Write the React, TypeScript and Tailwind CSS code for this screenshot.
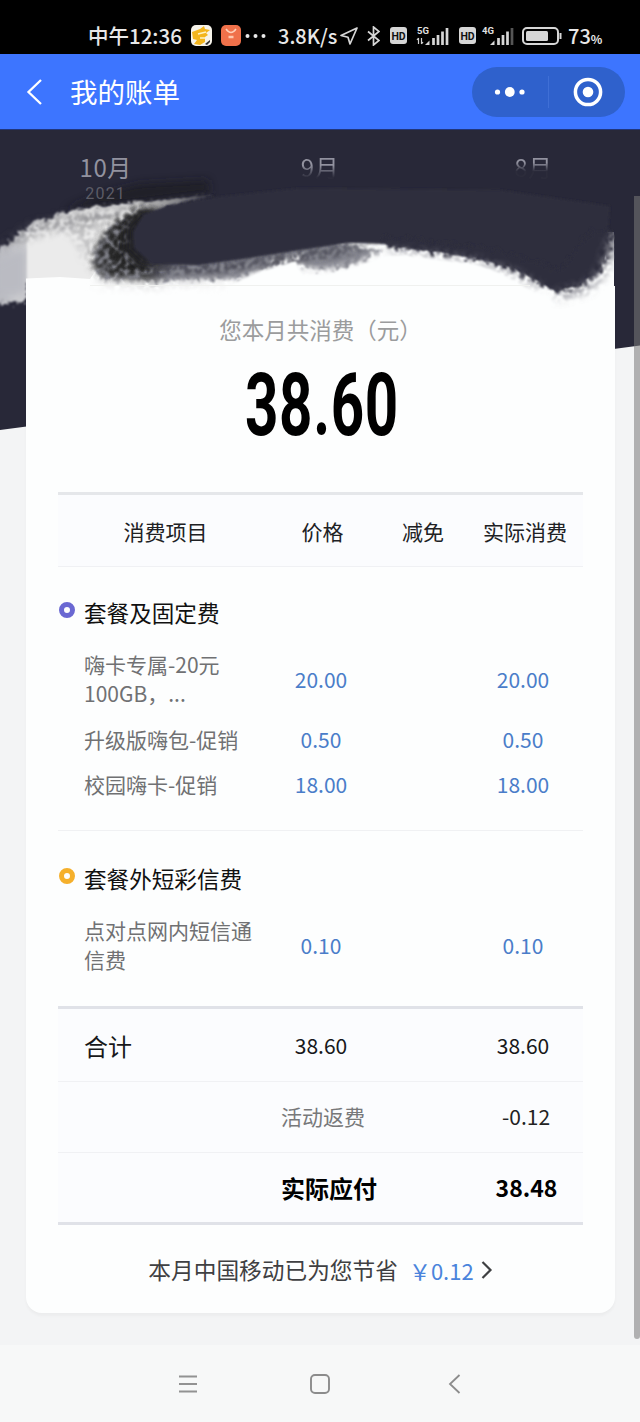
import type { ReactNode } from 'react';

interface BillItem {
  name: string;
  price: string;
  actual: string;
}

interface BillGroup {
  title: string;
  ring: string;
  items: BillItem[];
}

const groups: BillGroup[] = [
  {
    title: '套餐及固定费',
    ring: 'border-[#6a68d2]',
    items: [
      { name: '嗨卡专属-20元 100GB，...', price: '20.00', actual: '20.00' },
      { name: '升级版嗨包-促销', price: '0.50', actual: '0.50' },
      { name: '校园嗨卡-促销', price: '18.00', actual: '18.00' },
    ],
  },
  {
    title: '套餐外短彩信费',
    ring: 'border-[#f5b02c]',
    items: [{ name: '点对点网内短信通信费', price: '0.10', actual: '0.10' }],
  },
];

function Row({ className = '', children }: { className?: string; children: ReactNode }) {
  return (
    <div className={`grid grid-cols-[212px_102px_102px_98px] items-center ${className}`}>
      {children}
    </div>
  );
}

function HdBadge() {
  return (
    <svg width="17" height="17" viewBox="0 0 17 17">
      <rect width="17" height="17" rx="3" fill="#d6d6d6" />
      <text x="8.5" y="12.5" textAnchor="middle" fontSize="10.5" fontWeight="700" fontFamily="Roboto, sans-serif" fill="#111">HD</text>
    </svg>
  );
}

function Signal({ label, weak = false }: { label: string; weak?: boolean }) {
  return (
    <svg width="34" height="20" viewBox="0 0 34 20">
      <text x="1" y="8" fontSize="9.5" fontWeight="700" fontFamily="Roboto, sans-serif" fill="#e0e0e0">{label}</text>
      {!weak && (
        <path d="M2.500 18v-6M1 14l1.500-2M5.500 12v6M7 16l-1.500 2" stroke="#d0d0d0" strokeWidth="1.200" fill="none" />
      )}
      <path d="M9 19l4.500-4.500v4.500z" fill="#d6d6d6" />
      <path d="M17.500 19v-7M22 19v-10M26.500 19v-13.500" stroke="#d6d6d6" strokeWidth="2.700" />
      <path d="M31 19V2" stroke={weak ? '#555' : '#d6d6d6'} strokeWidth="2.700" />
    </svg>
  );
}

function StatusBar() {
  return (
    <div className="flex h-[54px] items-center bg-black pt-[17px] pl-[88px] text-[20.5px] font-medium leading-none whitespace-nowrap text-[#e8e8e8]">
      <span className="w-[103px]">中午12:36</span>
      <svg className="mr-[9px]" width="21" height="21" viewBox="0 0 21 21">
        <rect width="21" height="21" rx="5" fill="#f6f3ea" />
        <path d="M1 7l8-3 4-3 1 3 5 1-4 3 2 2-3 2v5l-5 3-6-1 3-4-4-1z" fill="#f3b51d" />
        <path d="M7 9l8-2M9 13h5" stroke="#fff3c4" strokeWidth="1.500" />
        <path d="M14 19l5-4v2l-3 3z" fill="#333" />
      </svg>
      <svg className="mr-[4px]" width="20" height="21" viewBox="0 0 20 21">
        <rect width="20" height="21" rx="5" fill="#f0714a" />
        <path d="M5 4q5 7 10 0" stroke="#ffd0b8" strokeWidth="1.500" fill="none" />
        <path d="M7.500 12h5" stroke="#ffc9ae" strokeWidth="2.500" />
      </svg>
      <svg className="mr-[12px]" width="21" height="6" viewBox="0 0 21 6" fill="#e8e8e8">
        <circle cx="2.500" cy="3" r="2" />
        <circle cx="10.500" cy="3" r="2" />
        <circle cx="18.500" cy="3" r="2" />
      </svg>
      <span className="w-[62px] text-[20px]">3.8K/s</span>
      <svg className="mr-[9px]" width="18" height="18" viewBox="0 0 18 18" fill="none" stroke="#d6d6d6" strokeWidth="1.700" strokeLinejoin="round">
        <path d="M17 1L1 8.500l7 1.800L10 17z" />
      </svg>
      <svg className="mr-[10px]" width="13" height="20" viewBox="0 0 13 20" fill="none" stroke="#d6d6d6" strokeWidth="1.700">
        <path d="M1 5.500l11 9L6.500 19V1L12 5.500l-11 9" />
      </svg>
      <HdBadge />
      <span className="ml-[9px]"><Signal label="5G" /></span>
      <span className="ml-[9px]"><HdBadge /></span>
      <span className="ml-[5px]"><Signal label="4G" weak /></span>
      <svg className="ml-[7px]" width="40" height="18" viewBox="0 0 40 18">
        <rect x="1" y="1" width="35" height="16" rx="4" fill="none" stroke="#d6d6d6" strokeWidth="2" />
        <rect x="4" y="4" width="22" height="10" rx="1.500" fill="#d6d6d6" />
        <path d="M38.500 6v6" stroke="#d6d6d6" strokeWidth="2" />
      </svg>
      <span className="ml-[6px] text-[20px]">73<span className="text-[12px] font-bold">%</span></span>
    </div>
  );
}

function NavBar() {
  return (
    <div className="flex h-[76px] items-center border-b border-[#20367c] bg-[#3d75ff] pr-[15px] pl-[26px]">
      <svg width="17" height="28" viewBox="0 0 17 28" fill="none" stroke="#fff" strokeWidth="2.300">
        <path d="M15 2L2.500 14 15 26" />
      </svg>
      <h1 className="ml-[27px] text-[27.5px] leading-none text-white">我的账单</h1>
      <div className="ml-auto flex h-[50px] w-[153px] items-center rounded-full bg-[#2f61cc]">
        <svg className="ml-[21px]" width="34" height="12" viewBox="0 0 34 12" fill="#fff">
          <circle cx="4.500" cy="6" r="2.600" />
          <circle cx="16.800" cy="6" r="4.900" />
          <circle cx="29" cy="6" r="2.600" />
        </svg>
        <span className="ml-[21px] h-8 w-px bg-[#3f6fd6]" />
        <svg className="ml-[24px]" width="30" height="30" viewBox="0 0 30 30">
          <circle cx="15" cy="15" r="12.600" fill="none" stroke="#fff" strokeWidth="3.500" />
          <circle cx="15" cy="15" r="5.300" fill="#fff" />
        </svg>
      </div>
    </div>
  );
}

// 卡片顶部的涂抹笔触
function BrushStroke() {
  return (
    <svg className="absolute top-0 left-0" width="640" height="184" viewBox="0 130 640 184">
      <defs>
        <filter id="rough" x="-10%" y="-20%" width="120%" height="140%">
          <feTurbulence type="fractalNoise" baseFrequency="0.2" numOctaves="3" seed="4" result="n" />
          <feDisplacementMap in="SourceGraphic" in2="n" scale="16" xChannelSelector="R" yChannelSelector="G" />
          <feGaussianBlur stdDeviation="1" />
        </filter>
        <filter id="grain" x="-20%" y="-30%" width="140%" height="160%">
          <feGaussianBlur in="SourceGraphic" stdDeviation="4" result="b" />
          <feTurbulence type="fractalNoise" baseFrequency="0.2" numOctaves="3" seed="9" />
          <feColorMatrix values="0 0 0 0 0  0 0 0 0 0  0 0 0 0 0  5 0 0 0 -1.900" result="m" />
          <feComposite in="b" in2="m" operator="in" />
          <feGaussianBlur stdDeviation="0.9" />
        </filter>
        <filter id="soft" x="-20%" y="-40%" width="140%" height="180%">
          <feGaussianBlur stdDeviation="4" />
        </filter>
        <filter id="edge" x="-5%" y="-10%" width="110%" height="120%">
          <feGaussianBlur stdDeviation="1.200" />
        </filter>
        <linearGradient id="pale" gradientUnits="userSpaceOnUse" x1="0" x2="215" y1="0" y2="0">
          <stop offset="0" stopColor="#b9bac0" />
          <stop offset="0.2" stopColor="#dededf" />
          <stop offset="0.6" stopColor="#dcdcdc" />
          <stop offset="0.8" stopColor="#8f8f92" />
          <stop offset="1" stopColor="#3a3a46" />
        </linearGradient>
        <linearGradient id="strip" x1="0" x2="0" y1="0" y2="1">
          <stop offset="0" stopColor="#63636e" />
          <stop offset="1" stopColor="#fdfefe" />
        </linearGradient>
      </defs>
      {/* 笔触上方的阴影 */}
      <path d="M64 210L100 194 140 184 208 180 210 193 130 203z" fill="#1c1c20" opacity="0.75" filter="url(#soft)" />
      {/* 浅色部分 */}
      <path d="M-12 256L12 240 36 222 60 214 84 209 130 205 216 195 170 206 140 222 130 284 26 284 26 303 -12 304z" fill="url(#pale)" filter="url(#rough)" />
      <path d="M60 216L84 210 130 204 216 195 160 206 120 222 90 226z" fill="url(#pale)" filter="url(#edge)" />
      <path d="M-6 262L26 246V294H-6z" fill="#babbc2" filter="url(#soft)" />
      <path d="M27 233H60L92 220 112 216 112 282H27z" fill="#ebebeb" filter="url(#edge)" />
      <path d="M26 278.500L60 277 90 279 96 270 614 270V320H26z" fill="#fdfefe" />
      <path d="M-6 250L26 226 60 216 104 210 146 206 128 218 70 226 24 240z" fill="#606066" opacity="0.55" filter="url(#grain)" />
      <path d="M60 226L100 212 92 250 86 262 76 240z" fill="#77777a" opacity="0.35" filter="url(#grain)" />
      {/* 深色部分 */}
      <path d="M130 262L240 244 400 236 560 250 604 262 608 232H614V300H130z" fill="#fdfefe" />
      <path d="M606 232H614V264H606z" fill="url(#strip)" />
      <path d="M134 214L108 228 97 246 94 262 100 279 150 283 190 280 236 280 262 270 298 254 304 266 320 272 354 265 384 251 300 238 160 240z" fill="#85868f" filter="url(#rough)" />
      <path d="M140 208L112 222 96 244 92 266 104 279 160 284 160 214z" fill="#2a2a2a" filter="url(#grain)" />
      <path d="M140 208L120 222 108 244 112 268 160 276 160 214z" fill="#202020" filter="url(#grain)" />
      <path d="M144 208L126 226 124 250 140 266 170 268 180 220z" fill="#232325" filter="url(#soft)" />
      <path d="M150 258L200 262 250 258 300 250 350 244 380 246 300 266 250 272 190 280 150 278z" fill="#4b4c57" filter="url(#grain)" />
      <path d="M216 197L170 205 144 214 133 232 134 248 152 264 200 265 250 258 300 250 350 243 384 244 440 252 480 259 512 268 540 282 556 291 580 284 596 272 605 254 608 232 610 206 500 190 300 188z" fill="#2d2d3c" filter="url(#edge)" />
      <path d="M384 236L386 247 440 254 480 261 512 270 540 284 558 292 582 286 600 272 609 252 612 232 590 232 560 270 500 250z" fill="#2d2d3c" filter="url(#rough)" />
      <path d="M556 296L586 288 604 270 612 238" stroke="#82828b" strokeWidth="8" fill="none" filter="url(#grain)" />
      <path d="M388 251L440 257 480 263 512 273 540 288" stroke="#9a9aa2" strokeWidth="5" fill="none" filter="url(#grain)" />
      <path d="M94 284L150 286 190 283 236 283 262 273M300 268L322 274 354 268 384 254" stroke="#f4f4f5" strokeWidth="9" fill="none" filter="url(#grain)" />
      <path d="M228 286L262 271 296 261 299 269 304 276 330 274 360 266 386 256 402 255 440 260 474 264 500 273 530 291 546 296 556 306H228z" fill="#fdfefe" filter="url(#edge)" />
      <path d="M615 228H626V306H615z" fill="#282838" />
      <path d="M90 285.500H530" stroke="#f0f1ef" />
    </svg>
  );
}

function Months() {
  return (
    <div className="relative z-10 grid h-[102px] grid-cols-3 pt-[22px] text-center text-[24px] leading-[30px] tracking-[0.5px]">
      <div className="pr-[2px] text-[#92929f]">
        10月
        <div className="font-[Roboto,sans-serif] text-[16px] leading-[23px] tracking-[1.2px] text-[#5c5c66]">2021</div>
      </div>
      <div className="h-[30px] bg-gradient-to-b from-[#92929f] from-45% to-[#2c2c3b] to-85% bg-clip-text text-transparent">9月</div>
      <div className="h-[30px] bg-gradient-to-b from-[#92929f] from-35% to-[#2c2c3b] to-65% bg-clip-text text-transparent">8月</div>
    </div>
  );
}

function BillTable() {
  return (
    <div className="mx-8 text-[21px] leading-[29px]">
      <Row className="h-[75px] border-t-[3px] border-b border-t-[#e5e7ea] border-b-[#f0f1f4] bg-[#fbfcfe] pt-0.5 text-center text-[#202124]">
        <span className="pl-[3px]">消费项目</span>
        <span className="pl-[3px]">价格</span>
        <span>减免</span>
        <span className="-mr-1 whitespace-nowrap">实际消费</span>
      </Row>

      {groups.map((group, index) => (
        <section key={group.title} className={index === 0 ? 'border-b border-[#f0f1f3] pt-[28px] pb-[31px]' : 'pt-[30px] pb-[32px]'}>
          <div className="flex h-[34px] items-center">
            <span className={`mb-[4px] ml-[1px] size-4 rounded-full border-[5px] ${group.ring}`} />
            <h2 className="ml-[9px] text-[22.6px] text-[#111]">{group.title}</h2>
          </div>
          <div className="mt-[21px] flex flex-col gap-[16.5px]">
            {group.items.map((item) => (
              <Row key={item.name} className="text-center text-[#4a7dc9]">
                <span className="pr-4 pl-[26px] text-left text-[#707173]">{item.name}</span>
                <span>{item.price}</span>
                <span />
                <span>{item.actual}</span>
              </Row>
            ))}
          </div>
        </section>
      ))}

      <div className="border-y-[3px] border-[#e0e2e8] bg-[#fbfcfe]">
        <Row className="h-[73px] border-b border-[#f0f1f4] text-center text-[#17181a]">
          <span className="pl-[26px] text-left text-[24px]">合计</span>
          <span>38.60</span>
          <span />
          <span>38.60</span>
        </Row>
        <Row className="h-[71px] border-b border-[#f0f1f4] pb-[2px] text-center">
          <span />
          <span className="pl-[4px] text-[#77787a]">活动返费</span>
          <span />
          <span className="pl-[6px] text-[#222]">-0.12</span>
        </Row>
        <Row className="h-[69px] pb-px text-center text-[24px] font-bold text-black">
          <span />
          <span className="pl-[11px] text-left whitespace-nowrap">实际应付</span>
          <span />
          <span className="pl-[7px] text-[23px]">38.48</span>
        </Row>
      </div>
    </div>
  );
}

export default function App() {
  return (
    <div className="h-[1422px] w-[640px] overflow-hidden bg-[#f3f4f5] font-['Noto_Sans_CJK_SC',sans-serif]">
      <StatusBar />
      <NavBar />

      <main className="relative isolate h-[1215px]">
        <svg className="absolute top-0 left-0 -z-10" width="640" height="301" viewBox="0 0 640 301">
          <path d="M0 0H640V215.500L0 300z" fill="#282838" />
        </svg>

        <Months />

        <div className="mr-[25px] ml-[26px] h-[1081px] pt-[54px]">
          <div className="h-[1027px] rounded-b-[16px] bg-[#fdfefe] pt-[27px] shadow-[0_3px_3px_rgba(0,0,0,0.03)]">
            <p className="h-8 text-center text-[22.5px] leading-[32px] text-[#9b9c9d]">您本月共消费（元）</p>
            <div className="mb-[27px] flex h-[120px] items-center justify-center pl-0.5">
              <span className="scale-x-[0.67] font-[Roboto,sans-serif] text-[87px] leading-none font-bold tracking-[1px] text-black">38.60</span>
            </div>

            <BillTable />

            <div className="flex h-[86px] items-center justify-center pt-1 text-[22.7px] leading-none text-[#3f4042]">
              <span>本月中国移动已为您节省</span>
              <span className="ml-[11px] text-[22px] text-[#4a84dc]">￥0.12</span>
              <svg className="ml-[7px]" width="12" height="20" viewBox="0 0 12 20" fill="none" stroke="#3f4042" strokeWidth="2.200">
                <path d="M1.500 2l8 8-8 8" />
              </svg>
            </div>
          </div>
        </div>

        <BrushStroke />
        <div className="absolute top-[66px] right-0 h-[1143px] w-[6px] rounded-b-sm bg-[#787878]/55" />
      </main>

      <nav className="flex h-[77px] items-center bg-[#f7f8f8] pl-[178px]">
        <svg width="20" height="18" viewBox="0 0 20 18" stroke="#929292" strokeWidth="1.800">
          <path d="M1 1.500h18M1 9h18M1 16.500h18" />
        </svg>
        <svg className="ml-[112px]" width="20" height="20" viewBox="0 0 20 20" fill="none" stroke="#8c8c8c" strokeWidth="1.900">
          <rect x="1" y="1" width="18" height="18" rx="4" />
        </svg>
        <svg className="ml-[118px]" width="13" height="20" viewBox="0 0 13 20" fill="none" stroke="#8c8c8c" strokeWidth="1.800">
          <path d="M11.500 1L2 10l9.500 9" />
        </svg>
      </nav>
    </div>
  );
}
